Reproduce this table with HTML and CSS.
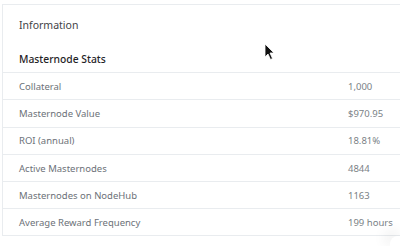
FILE: index.html
```html
<!DOCTYPE html>
<html lang="en">
<head>
    <meta charset="UTF-8">
    <meta name="viewport" content="width=device-width, initial-scale=1.0">
    <title>Masternode Information</title>
    <link rel="stylesheet" href="styles.css">
</head>
<body>
    <div class="card">
        <div class="card-head">Information</div>
        <div class="stats-title">Masternode Stats</div>
        <div class="row"><span>Collateral</span><span class="val">1,000</span></div>
        <div class="row"><span>Masternode Value</span><span class="val">$970.95</span></div>
        <div class="row"><span>ROI (annual)</span><span class="val">18.81%</span></div>
        <div class="row"><span>Active Masternodes</span><span class="val">4844</span></div>
        <div class="row"><span>Masternodes on NodeHub</span><span class="val">1163</span></div>
        <div class="row"><span>Average Reward Frequency</span><span class="val">199 hours</span></div>
    </div>

    <!-- chat bubble peeking in at the corner -->
    <div class="bubble"></div>

    <!-- mouse pointer -->
    <svg class="pointer" width="12" height="18" viewBox="0 0 12 18">
        <path d="M1 1 L1 14 L4 11 L6.5 16.5 L8.5 15.5 L6 10 L10 10 Z" fill="#111" stroke="#fff" stroke-width="0.8"/>
    </svg>
</body>
</html>
```

FILE: styles.css
```css
* {
    margin: 0;
    padding: 0;
    box-sizing: border-box;
}
html, body {
    background: #fff;
    font-family: "Noto Sans", Arial, sans-serif;
    overflow: hidden;
    width: 400px;
    height: 246px;
}
body {
    position: relative;
    padding: 4px 0 0 2px;
}
.card {
    border-top: 1px solid #e9ecef;
    border-left: 1px solid #e9ecef;
    width: 398px;
}
.card-head {
    height: 39px;
    padding: 13px 0 0 16px;
    font-size: 10.5px;
    color: #3f4347;
}
.stats-title {
    height: 29px;
    padding: 8px 0 0 16px;
    font-size: 10.3px;
    font-weight: 500;
    color: #1f2326;
    border-bottom: 1px solid #e9ecef;
}
.row {
    display: flex;
    height: 27.3px;
    align-items: center;
    padding-left: 16px;
    font-size: 9.5px;
    color: #6c7178;
    border-bottom: 1px solid #e9ecef;
}
.row:last-child {
    height: 27px;
}
.row span:first-child {
    width: 329px;
}
.val {
    color: #7a7f86;
}
.bubble {
    position: absolute;
    left: 390px;
    top: 236px;
    width: 10px;
    height: 10px;
    background: #fff;
    border-radius: 8px 0 0 0;
    box-shadow: -4px -4px 14px rgba(0, 0, 0, 0.13);
}
.pointer {
    position: absolute;
    left: 264px;
    top: 43px;
}
```
